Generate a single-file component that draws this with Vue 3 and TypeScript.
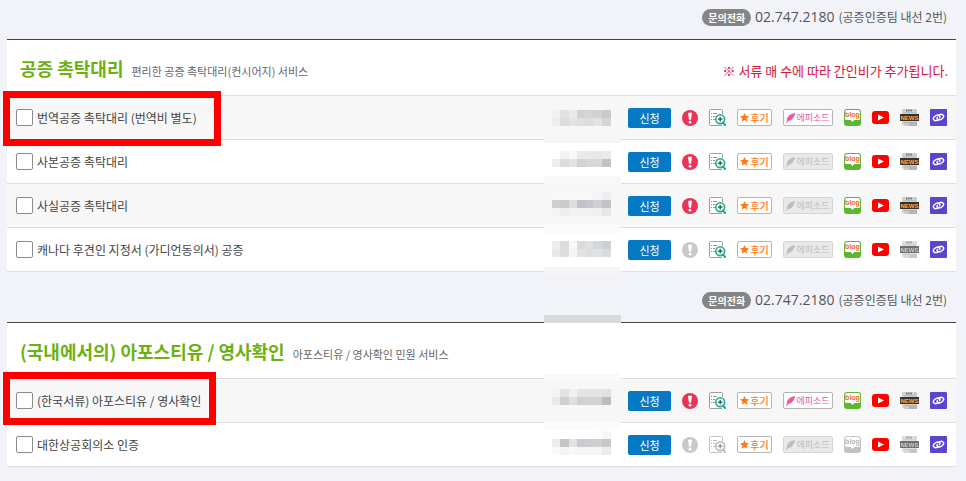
<script setup lang="ts">
interface Block {
  x: number
  y: number
  w: number
  color: string
}

interface Service {
  id: string
  name: string
  notice: boolean
  detail: boolean
  episode: boolean
  blog: boolean
  news: boolean
  mark?: 'wide' | 'narrow'
  price: Block[]
}

interface Group {
  id: string
  title: string
  summary: string
  remark?: string
  services: Service[]
}

const COLUMN = 8

// One strip of price blocks, starting in the second column of the price area.
function strip(y: number, colors: string): Block[] {
  return colors.split(' ').map((c, i) => ({ x: 8 + i * COLUMN + Math.round(i / 4), y, w: COLUMN + 1, color: '#' + c }))
}

function band(y: number, color: string): Block {
  return { x: 0, y, w: 77, color: '#' + color }
}

const groups: Group[] = [
  {
    id: 'notary',
    title: '공증 촉탁대리',
    summary: '편리한 공증 촉탁대리(컨시어지) 서비스',
    remark: '※ 서류 매 수에 따라 간인비가 추가됩니다.',
    services: [
      {
        id: 'n1', name: '번역공증 촉탁대리 (번역비 별도)', mark: 'wide',
        notice: true, detail: true, episode: true, blog: true, news: true,
        price: [...strip(14, 'f1f1f1 e1e2e2 e9e9e5 d1d2d5 d5d6d6 d4d0d0 c6cacd'), ...strip(22, 'ededed dbdcdc e3e3e4 e0e0e1 dcdedd e3e3e3 d4d5d8'), band(39, 'f6f6f7')],
      },
      {
        id: 'n2', name: '사본공증 촉탁대리',
        notice: true, detail: true, episode: false, blog: true, news: true,
        price: [...strip(11, 'fefefb f2f3f3 f8f9fa ebebec e9eaea e7e8e9 e9eaeb'), ...strip(19, 'eeeeef dcdcdc e5e3df d1d1d6 d7d7d9 dcd7d6 c1c2c8'), band(36, 'f8f8f8')],
      },
      {
        id: 'n3', name: '사실공증 촉탁대리',
        notice: true, detail: true, episode: false, blog: true, news: true,
        price: [...strip(8, 'f8f8f8 f8f8f8 f8f8f8 f8f8f8 f8f8f8 f4f5f6 eeeff1'), ...strip(16, 'cececf cbcbcc deddd8 c1c2c9 c4c8cc d0cece c2c3c6'), ...strip(24, 'f3f3f2 eeeeef f2f2f2 f0f1f2 f1f2f2 f0f0f0 e6e7e9'), band(41, 'fafafa')],
      },
      {
        id: 'n4', name: '캐나다 후견인 지정서 (가디언동의서) 공증',
        notice: false, detail: true, episode: false, blog: true, news: false,
        price: [...strip(13, 'eeeeee dbdcdf f8f8f6 dadadc dfe0e0 d6d7da cbd0d3'), ...strip(21, 'e9e9e9 dcdddd f4f4f4 e3e3e4 dededf e2e1e1 d9dcdd'), band(39, 'f5f5f6')],
      },
    ],
  },
  {
    id: 'apostille',
    title: '(국내에서의) 아포스티유 / 영사확인',
    summary: '아포스티유 / 영사확인 민원 서비스',
    services: [
      {
        id: 'a1', name: '(한국서류) 아포스티유 / 영사확인', mark: 'narrow',
        notice: true, detail: true, episode: true, blog: true, news: true,
        price: [band(-64, 'd8d9dd'), band(-6, 'fafafa'), ...strip(10, 'f3f3f3 e2e2e3 f0f0ef e5e5e6 e3e3e4 e3e4e4 e0e1e2'), ...strip(18, 'eaeaea cfcfd0 e1e0dc ceced3 d0d2d6 d6d1d1 bcbdc2'), band(43, 'fbfbfb')],
      },
      {
        id: 'a2', name: '대한상공회의소 인증',
        notice: false, detail: false, episode: false, blog: false, news: false,
        price: [...strip(8, 'ffffff ffffff ffffff ffffff ffffff fcfdfd f4f6f8'), ...strip(16, 'eeede9 c4c5c7 e3e2de c9cbd1 cbcfd1 d1cfd0 c6c8cb'), ...strip(24, 'fafaf8 f4f4f4 f8f8f8 f5f5f5 f5f6f6 f5f5f5 ebecee')],
      },
    ],
  },
]
</script>

<template>
  <main class="page">
    <section v-for="group in groups" :key="group.id" class="group">
      <div class="contact">
        <span class="contact-badge">문의전화</span>
        <span class="contact-number">02.747.2180</span>
        <span class="contact-team">(공증인증팀 내선 2번)</span>
      </div>
      <div class="panel">
        <header class="panel-head">
          <h2 class="title">{{ group.title }}</h2>
          <p class="summary">{{ group.summary }}</p>
          <p v-if="group.remark" class="remark">{{ group.remark }}</p>
        </header>
        <table class="services">
          <tbody>
            <tr v-for="s in group.services" :key="s.id">
              <td class="name-cell">
                <label class="name" :for="s.id"><input :id="s.id" type="checkbox" class="check" />{{ s.name }}</label>
                <span v-if="s.mark" class="mark" :class="s.mark"></span>
              </td>
              <td class="price-cell">
                <svg class="price" width="77" height="43" viewBox="0 0 77 43" aria-hidden="true">
                  <rect v-for="(b, i) in s.price" :key="i" :x="b.x" :y="b.y" :width="b.w" height="8" :fill="b.color" />
                </svg>
              </td>
              <td class="action-cell">
                <div class="actions">
                  <button type="button" class="apply">신청</button>
                  <a href="#" class="icon" aria-label="유의사항">
                    <svg width="16" height="16" viewBox="0 0 16 16">
                      <circle cx="8" cy="8" r="8" :fill="s.notice ? '#e93455' : '#c9c9c9'" />
                      <path d="M6 3.1Q8 1.9 10 3.1L9 9.8H7Z" fill="#fff" />
                      <circle cx="8" cy="12.2" r="1.4" fill="#fff" />
                    </svg>
                  </a>
                  <a href="#" class="icon" :class="{ off: !s.detail }" aria-label="상세보기">
                    <svg width="17" height="17" viewBox="0 0 17 17">
                      <path d="M13.5 5V1.5a1 1 0 0 0-1-1H1.5a1 1 0 0 0-1 1v14a1 1 0 0 0 1 1H13" fill="#fff" stroke="#9a9f9f" />
                      <path d="M2 4.5h1M4 4.5h4M2 7.5h1M4 7.5h2M2 10.5h1M4 10.5h2" stroke="#8f9696" fill="none" />
                      <circle cx="11.2" cy="10.2" r="4.4" fill="#fff" stroke="#20ad83" stroke-width="1.6" />
                      <path d="M14 13.6l2 2.3" stroke="#20ad83" stroke-width="2.2" stroke-linecap="round" />
                      <path d="M8.8 10.2h4.8M11.2 7.8v4.8" stroke="#26566a" stroke-width="1.3" />
                    </svg>
                  </a>
                  <a href="#" class="tag review">
                    <svg width="9" height="9" viewBox="0 0 10 10"><path d="M5 0l1.5 3.2 3.5.4-2.6 2.4.7 3.6L5 7.8 1.9 9.6 2.6 6 0 3.6l3.5-.4z" fill="#ff7815" /></svg>후기
                  </a>
                  <a href="#" class="tag episode" :class="{ muted: !s.episode }">
                    <svg width="9" height="10" viewBox="0 0 9 10"><path d="M0 10L1 7.5Q.5 4.8 2.8 2.8 5 .8 9 0 8.9 2.6 7.6 4 7 5.8 5.4 6.7 4 7.9 2 8L.9 10z" fill="currentColor" /></svg>에피소드
                  </a>
                  <a href="#" class="icon" :class="{ off: !s.blog }" aria-label="블로그">
                    <svg width="17" height="17" viewBox="0 0 17 17">
                      <rect width="17" height="17" rx="3" fill="#5cb832" />
                      <path d="M3 1h11a2 2 0 0 1 2 2v6.5a1.5 1.5 0 0 1-1.5 1.5H10.3L8.5 13 6.7 11H2.5A1.5 1.5 0 0 1 1 9.5V3a2 2 0 0 1 2-2z" fill="#fff" />
                      <text x="8.5" y="8" text-anchor="middle" class="blog-text">blog</text>
                    </svg>
                  </a>
                  <a href="#" class="icon" aria-label="유튜브">
                    <svg width="17" height="17" viewBox="0 0 17 17">
                      <rect y="2" width="17" height="13" rx="3" fill="#f00" />
                      <path d="M6 5.4v6.2l6-3.1z" fill="#fff" />
                    </svg>
                  </a>
                  <a href="#" class="icon" :class="{ 'news-off': !s.news }" aria-label="뉴스">
                    <svg width="19" height="17" viewBox="0 0 19 17">
                      <path d="M2 0h15v17H4l-2-2z" fill="#d4d2cd" />
                      <path d="M6 1.5h6" stroke="#777" stroke-width="2" stroke-dasharray="1.2 .5" />
                      <path d="M14 1.5h2M3 3.7h13" stroke="#a5bfc6" />
                      <path d="M4 13h13v4H5z" fill="#b6b2ad" />
                      <path d="M4 14h5v3H5z" fill="#cfccc7" />
                      <rect y="5" width="19" height="7" fill="#343332" />
                      <text x="9.5" y="11" text-anchor="middle" class="news-text">NEWS</text>
                    </svg>
                  </a>
                  <a href="#" class="icon" aria-label="링크">
                    <svg width="17" height="17" viewBox="0 0 17 17">
                      <rect width="17" height="17" rx="1" fill="#5b45cf" />
                      <g fill="none" stroke="#fff" stroke-width="1.5" stroke-linecap="round">
                        <path d="M9 10.2Q6.3 12.6 4.2 11.2 2.2 9.6 4.6 7.5 7 5.6 9.1 6.3 10.5 7 9.7 8.4" />
                        <path d="M8 6.8Q10.7 4.4 12.8 5.8 14.8 7.4 12.4 9.5 10 11.4 7.9 10.7 6.5 10 7.3 8.6" />
                      </g>
                    </svg>
                  </a>
                </div>
              </td>
            </tr>
          </tbody>
        </table>
      </div>
    </section>
  </main>
</template>

<style>
body {
  margin: 0;
  background: #f2f3f8;
}
</style>

<style scoped>
.page {
  padding: 0 10px 15px 7px;
  font-family: "Noto Sans CJK KR", sans-serif;
  font-size: 12px;
  color: #444;
}
.group + .group {
  margin-top: 11px;
}
.contact {
  display: flex;
  align-items: center;
  justify-content: flex-end;
  gap: 4px;
  height: 34px;
  padding: 0 9px 5px 0;
  color: #555;
}
.contact-badge {
  padding: 0 6px;
  border-radius: 9px;
  background: #858585;
  color: #fff;
  font-size: 10px;
  font-weight: 700;
  line-height: 17px;
}
.contact-number {
  font-family: "Open Sans", sans-serif;
  font-size: 14px;
  line-height: 18px;
}
.contact-team {
  line-height: 18px;
}
.panel {
  border-top: 1px solid #444;
  background: #fff;
}
.panel-head {
  display: flex;
  align-items: baseline;
  gap: 8px;
  height: 41px;
  padding: 14px 8px 0 13px;
}
.title {
  margin: 0;
  color: #6bb112;
  font-size: 18px;
  line-height: 28px;
}
.summary {
  margin: 0;
  color: #666;
  font-size: 11px;
}
.remark {
  margin: 0 0 0 auto;
  color: #dc143c;
  font-size: 13px;
  font-weight: 400;
}
.services {
  width: 100%;
  border-collapse: separate;
  border-spacing: 0;
  border-top: 1px solid #dedede;
}
.services td {
  height: 43px;
  padding: 0;
  border-bottom: 1px solid #dedede;
  vertical-align: middle;
}
.services tr:nth-child(odd) td {
  background: #f7f7f7;
}
.name-cell {
  position: relative;
}
.name {
  display: flex;
  align-items: center;
  gap: 4px;
  padding-left: 9px;
  line-height: 18px;
}
.check {
  appearance: none;
  box-sizing: border-box;
  width: 17px;
  height: 17px;
  margin: 0;
  border: 1px solid #8c8c8c;
  border-radius: 2px;
  background: #fff;
}
.check:checked {
  background: #0679c4;
}
.mark {
  position: absolute;
  top: -5px;
  left: -4px;
  border: 7px solid #f00;
  pointer-events: none;
}
.mark.wide {
  bottom: -7px;
  width: 204px;
}
.mark.narrow {
  top: -7px;
  bottom: -3px;
  width: 199px;
}
.price-cell {
  width: 83px;
}
.price {
  display: block;
  position: relative;
  overflow: visible;
}
.action-cell {
  width: 329px;
}
.actions {
  display: flex;
  align-items: center;
  justify-content: flex-end;
  gap: 11px;
  padding-right: 9px;
}
.apply {
  width: 43px;
  height: 20px;
  padding: 0;
  border: 0;
  border-radius: 2px;
  background: #0679c4;
  color: #fff;
  font-family: inherit;
  font-size: 11px;
  line-height: 20px;
}
.icon {
  display: block;
}
.icon svg {
  display: block;
}
.off {
  filter: grayscale(1);
  opacity: 0.6;
}
.news-off {
  filter: grayscale(1);
  opacity: 0.7;
}
.tag {
  display: flex;
  align-items: center;
  justify-content: center;
  box-sizing: border-box;
  height: 17px;
  border: 1px solid #b5b5b5;
  border-radius: 2px;
  background: #fff;
  line-height: 15px;
  text-decoration: none;
  white-space: nowrap;
}
.review {
  gap: 1px;
  width: 35px;
  color: #ff7815;
  font-size: 10px;
  font-weight: 500;
}
.episode {
  gap: 1px;
  width: 50px;
  color: #ee55a2;
  font-size: 9px;
}
.episode.muted {
  border-color: #d5d5d5;
  background: #e9e9e9;
  color: #bdbdbd;
}
.blog-text {
  fill: #e96b24;
  font: 700 7px "Liberation Sans", sans-serif;
}
.news-text {
  fill: #ffb22e;
  font: 700 6px "Liberation Sans", sans-serif;
}
</style>
